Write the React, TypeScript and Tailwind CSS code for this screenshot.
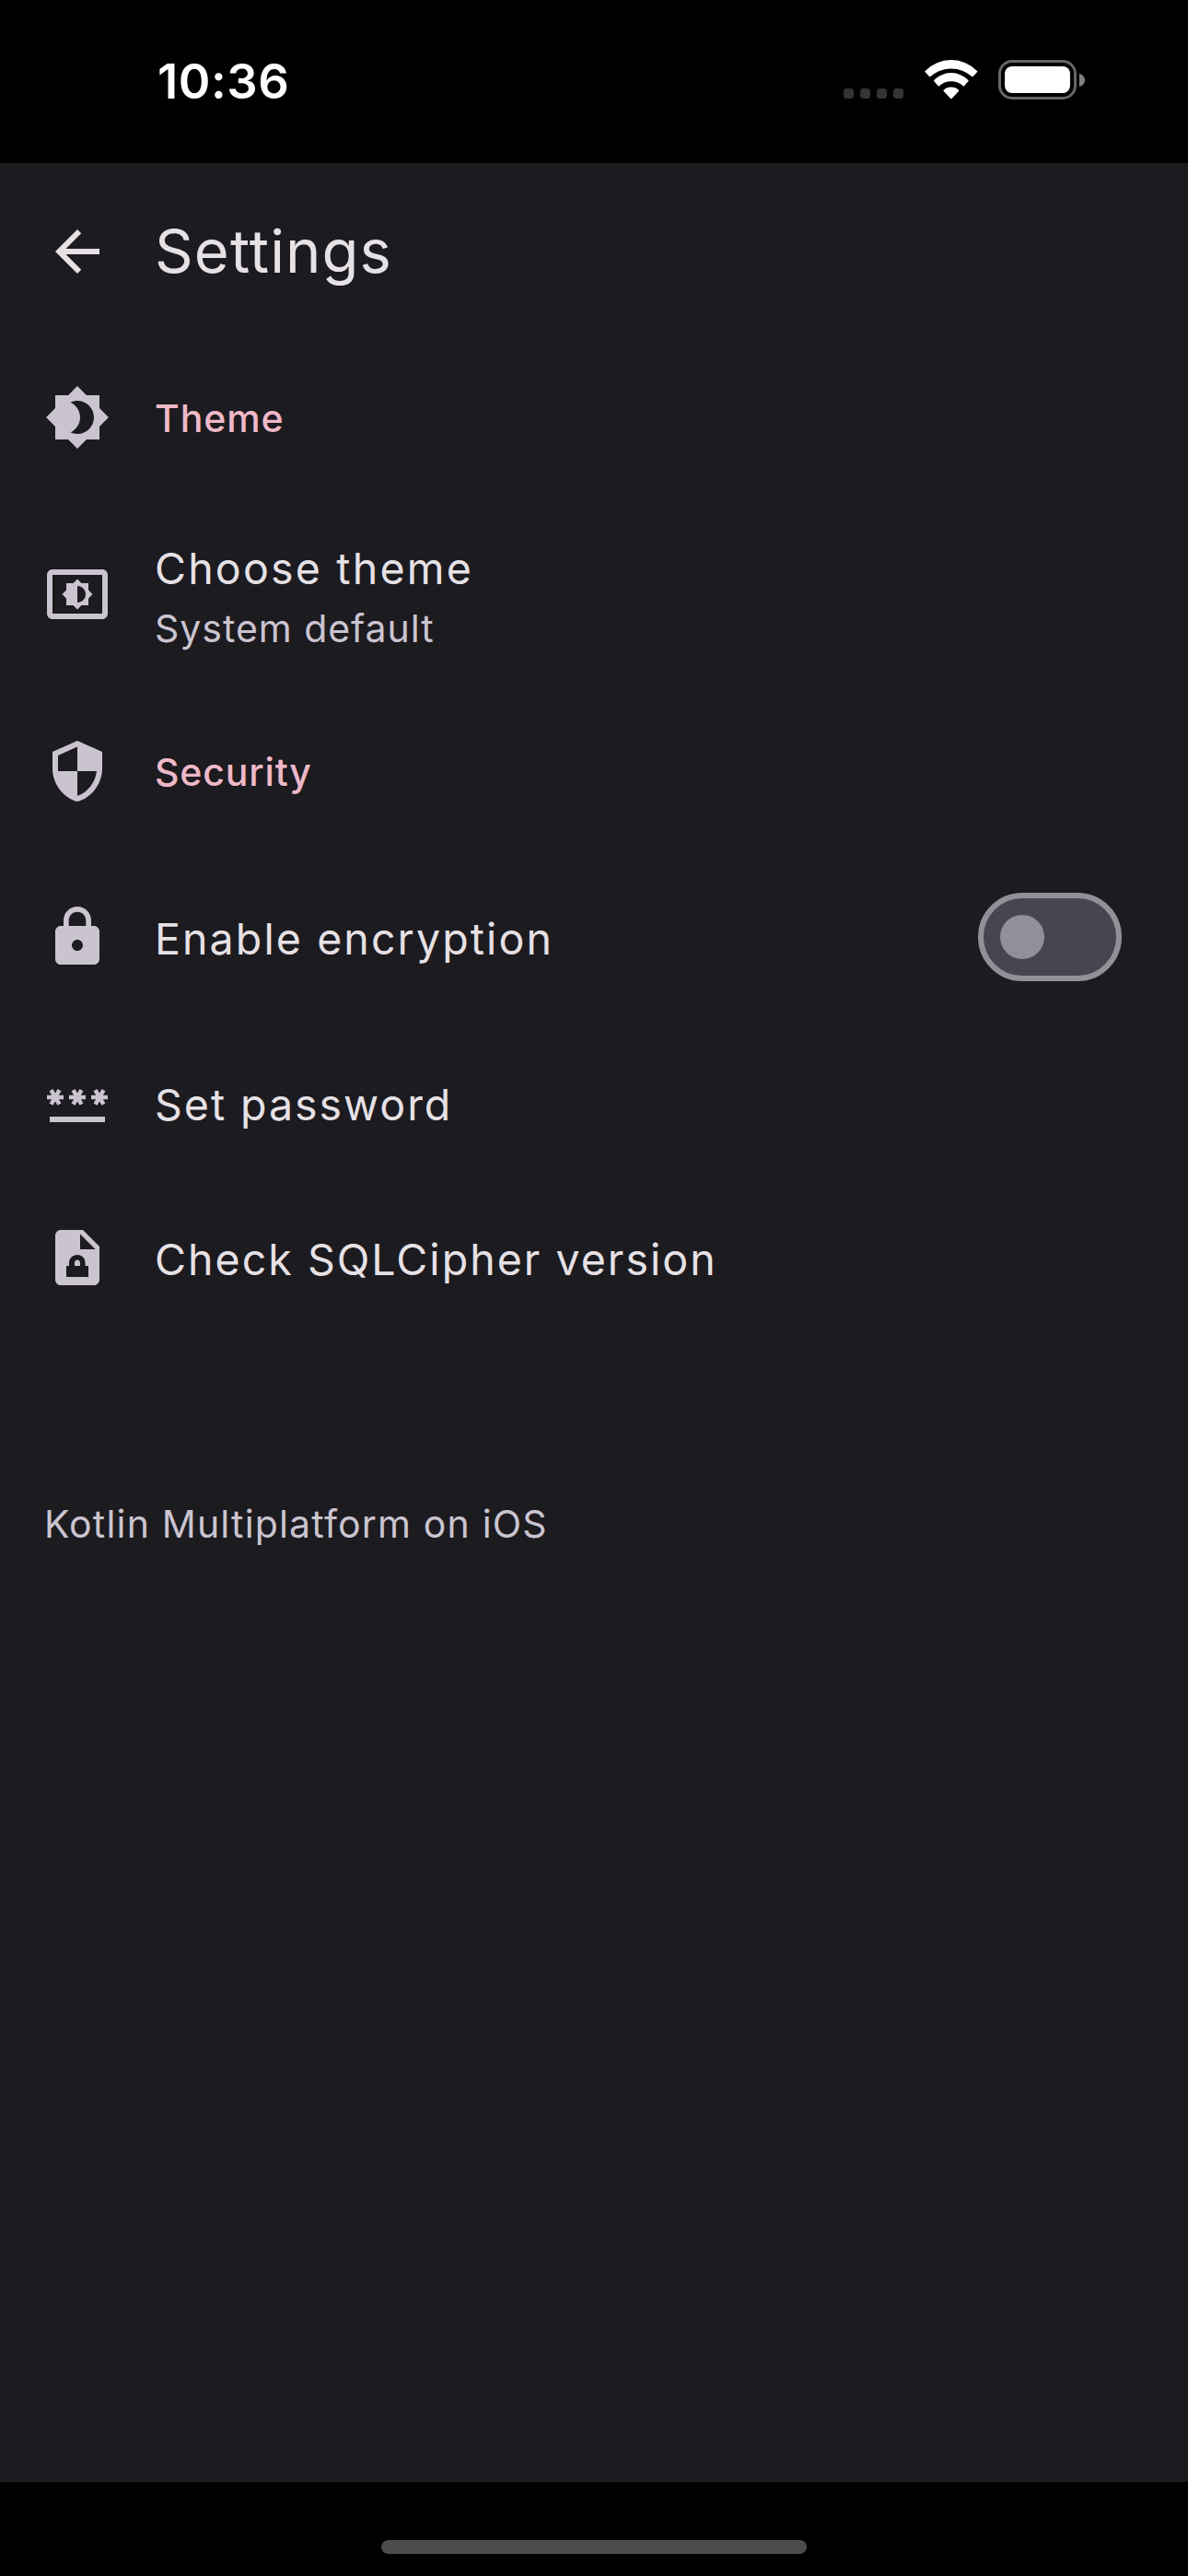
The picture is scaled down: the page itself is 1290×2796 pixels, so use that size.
import type { ReactNode } from "react";
import {
  MdArrowBack,
  MdBrightness4,
  MdLock,
  MdPassword,
  MdSecurity,
} from "react-icons/md";

const ICON = "size-[72px] shrink-0 text-[#cac4d0]";

function SettingsBrightnessIcon() {
  return (
    <svg viewBox="0 0 24 24" fill="currentColor" className={ICON}>
      <path d="M21 3H3c-1.1 0-2 .9-2 2v14c0 1.1.9 2 2 2h18c1.1 0 2-.9 2-2V5c0-1.1-.9-2-2-2zm0 16.01H3V4.99h18v14.02zM8 16h2.5l1.5 1.5 1.5-1.5H16v-2.5l1.5-1.5-1.5-1.5V8h-2.5L12 6.5 10.5 8H8v2.5L6.5 12 8 13.5V16zm4-7c1.66 0 3 1.34 3 3s-1.34 3-3 3V9z" />
    </svg>
  );
}

function FileLockIcon() {
  return (
    <svg viewBox="0 0 24 24" fill="currentColor" fillRule="evenodd" className={ICON}>
      <path d="M14 2H6c-1.1 0-2 .9-2 2v16c0 1.1.9 2 2 2h12c1.1 0 2-.9 2-2V8l-6-6zM13 9V3.5L18.5 9H13zM8 19v-4h1v-1.1C9 12.2 10.3 11 12 11s2.85 1.2 2.85 2.9V15H16v4H8zM11 15h2v-1.1c0-.6-.4-1.1-1-1.1s-1 .5-1 1.1V15z" />
    </svg>
  );
}

function StatusBar() {
  return (
    <header className="flex h-[177px] shrink-0 bg-black">
      <time className="ml-[171px] mt-[52px] text-[52.5px] leading-[72px] font-semibold tracking-[0.6px] text-white">
        10:36
      </time>
      <div className="mr-[112px] ml-auto flex items-start">
        <div className="mt-24 flex gap-[7px]">
          {[0, 1, 2, 3].map((dot) => (
            <span key={dot} className="size-[11px] rounded-[3.5px] bg-[#343434]" />
          ))}
        </div>
        <svg viewBox="0 0 174 129" className="mt-[65px] ml-[23px] h-[43px] w-[58px]" fill="#fff">
          <path d="M2 36Q0 38 2 40L15 54Q17 56 19 54A103 103 0 0 1 154 54Q156 56 158 54L171 40Q173 38 171 36A118 118 0 0 0 2 36Z" />
          <path d="M31 66Q29 68 31 70L44 85Q46 87 48 85A57 57 0 0 1 125 85Q127 87 129 85L142 70Q144 68 142 66A77 77 0 0 0 31 66Z" />
          <path d="M62 98Q60 100 62 102L84 125Q86.5 128 89 125L111 102Q113 100 111 98A36 36 0 0 0 62 98Z" />
        </svg>
        <div className="mt-[65px] ml-[22px] h-[43px] w-[85px] rounded-[15px] border-[3px] border-[#666] p-1">
          <div className="h-[29px] rounded-[8px] bg-white" />
        </div>
        <svg viewBox="0 0 6 14" className="mt-[80px] ml-[3px] h-[14px] w-[6px]" fill="#808080">
          <path d="M0 0C8 2 8 12 0 14Z" />
        </svg>
      </div>
    </header>
  );
}

function Row({
  icon,
  height,
  children,
}: {
  icon: ReactNode;
  height: string;
  children: ReactNode;
}) {
  return (
    <div className={`flex items-center gap-12 pr-[72px] pl-12 ${height}`}>
      {icon}
      {children}
    </div>
  );
}

const HEADING = "pt-0.5 text-[41px] leading-[60px] font-medium text-[#efb8c8]";
const LABEL = "pt-[3px] text-[46.5px] leading-[72px] text-[#e6e1e5]";

export default function App() {
  return (
    <div className="flex h-[2796px] w-[1290px] flex-col overflow-hidden bg-black font-['Inter',sans-serif] whitespace-nowrap">
      <StatusBar />
      <main className="flex flex-1 flex-col bg-[#1c1b1f]">
        <div className="flex h-48 items-center gap-12 pl-12">
          <MdArrowBack className="size-[72px] shrink-0 text-[#e6e1e5]" />
          <h1 className="text-[65px] leading-[84px] tracking-[1.15px] text-[#e6e1e5]">Settings</h1>
        </div>

        <Row icon={<MdBrightness4 className={ICON} />} height="h-[168px]">
          <h2 className={`${HEADING} tracking-[0.9px]`}>Theme</h2>
        </Row>
        <Row icon={<SettingsBrightnessIcon />} height="h-[216px]">
          <div className="pt-px">
            <p className="text-[46.5px] leading-[72px] tracking-[2.2px] text-[#e6e1e5]">Choose theme</p>
            <p className="text-[41px] leading-[58px] tracking-[0.97px] text-[#cac4d0]">
              System default
            </p>
          </div>
        </Row>

        <Row icon={<MdSecurity className={ICON} />} height="h-[168px]">
          <h2 className={`${HEADING} tracking-[0.85px]`}>Security</h2>
        </Row>
        <Row icon={<MdLock className={ICON} />} height="h-48">
          <p className={`${LABEL} tracking-[2.1px]`}>Enable encryption</p>
          <button
            role="switch"
            aria-checked={false}
            aria-label="Enable encryption"
            className="ml-auto flex h-24 w-[156px] items-center rounded-full border-6 border-[#938f99] bg-[#49454f] pl-[18px]"
          >
            <span className="size-12 rounded-full bg-[#938f99]" />
          </button>
        </Row>
        <Row icon={<MdPassword className={ICON} />} height="h-[168px]">
          <p className={`${LABEL} tracking-[1.97px]`}>Set password</p>
        </Row>
        <Row icon={<FileLockIcon />} height="h-[168px]">
          <p className={`${LABEL} tracking-[2.03px]`}>Check SQLCipher version</p>
        </Row>

        <p className="mt-[175px] pl-12 text-[41px] leading-[60px] tracking-[1.17px] text-[#cac4d0]">
          Kotlin Multiplatform on iOS
        </p>
      </main>
      <footer className="flex h-[102px] shrink-0 justify-center bg-black pt-[63px]">
        <div className="h-[15px] w-[462px] rounded-full bg-[#4c4c4c]" />
      </footer>
    </div>
  );
}
